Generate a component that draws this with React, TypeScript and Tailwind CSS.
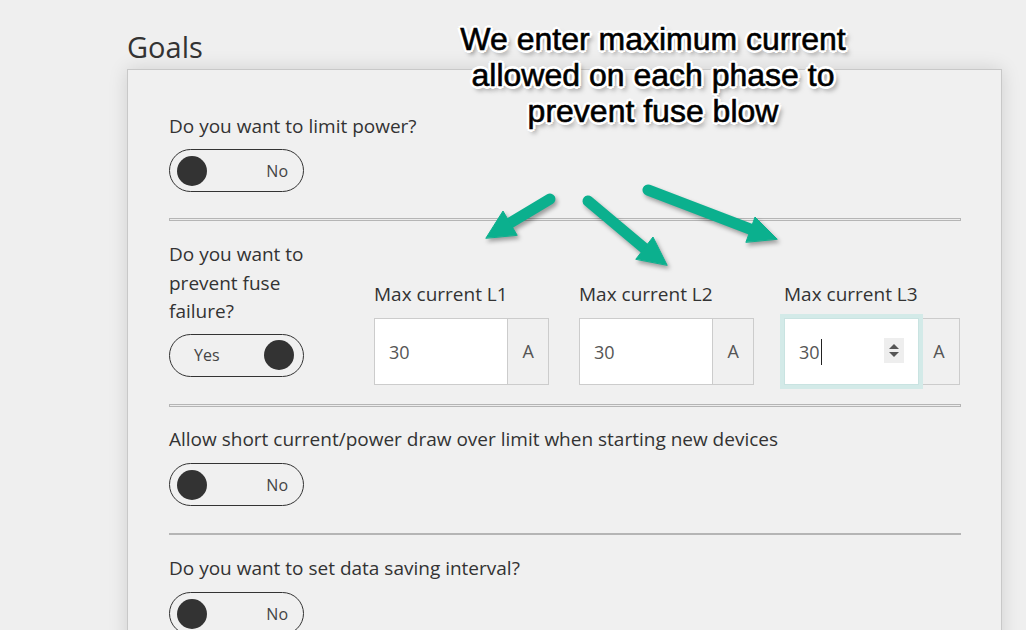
import React from "react";

function Toggle({ on }: { on: boolean }) {
  return (
    <div className="w-[135px] h-[43px] rounded-full border border-[#333] flex items-center px-[7px] box-border">
      {on ? (
        <div className="flex w-full items-center justify-between pl-[17px] pr-[2px]">
          <span className="text-[16px] text-[#444] leading-none">Yes</span>
          <span className="w-[30px] h-[30px] rounded-full bg-[#333] block" />
        </div>
      ) : (
        <div className="flex w-full items-center justify-between pr-[8px]">
          <span className="w-[30px] h-[30px] rounded-full bg-[#333] block" />
          <span className="text-[16px] text-[#444] leading-none">No</span>
        </div>
      )}
    </div>
  );
}

function Field({ label, focused }: { label: string; focused?: boolean }) {
  return (
    <div className="flex flex-col">
      <div className="text-[19px] leading-[28px] text-[#333]">{label}</div>
      <div className="mt-[10px] flex h-[67px]">
        <div
          className={
            focused
              ? "relative z-10 w-[135px] h-full bg-white border border-[#c9e3e1] shadow-[0_0_0_4px_#d3eae8] flex items-center pl-[14px]"
              : "w-[135px] h-full bg-white border border-[#cccccc] flex items-center pl-[14px]"
          }
        >
          <span className="text-[18px] text-[#555] leading-none">30</span>
          {focused && (
            <>
              <span className="ml-[1px] w-[1px] h-[26px] bg-[#222] block" />
              <span className="absolute right-[14px] top-[19px] w-[20px] h-[25px] bg-[#eeeeee] flex flex-col items-center justify-center gap-[3px]">
                <span className="block w-0 h-0 border-l-[5px] border-r-[5px] border-b-[5px] border-l-transparent border-r-transparent border-b-[#555]" />
                <span className="block w-0 h-0 border-l-[5px] border-r-[5px] border-t-[5px] border-l-transparent border-r-transparent border-t-[#555]" />
              </span>
            </>
          )}
        </div>
        <div className="w-[41px] h-full border border-l-0 border-[#cccccc] bg-[#f0f0f0] flex items-center justify-center text-[18px] text-[#555]">
          A
        </div>
      </div>
    </div>
  );
}

function Hr() {
  return <div className="h-[3px] border border-[#b5b5b5] bg-[#ececec]" />;
}

export default function App() {
  return (
    <div className="relative w-[1026px] h-[630px] overflow-hidden bg-[#efefef] font-['Open_Sans',sans-serif]">
      <div className="pl-[127px] pt-[29px]">
        <h1 className="text-[29px] leading-[36px] text-[#333] font-normal">Goals</h1>
        <div className="mt-[4px] w-[875px] h-[700px] border border-[#c8c8c8] bg-[#f0f0f0] shadow-[0_0_18px_rgba(0,0,0,0.13)] pl-[41px] pr-[40px] pt-[42px]">
          {/* Section 1 */}
          <div className="pb-[26px]">
            <div className="text-[19px] leading-[28px] text-[#333]">Do you want to limit power?</div>
            <div className="mt-[9px]">
              <Toggle on={false} />
            </div>
          </div>
          <Hr />
          {/* Section 2 */}
          <div className="pt-[19px] pb-[19px] flex">
            <div className="w-[205px] shrink-0">
              <div className="w-[150px] text-[19px] leading-[28.5px] text-[#333]">
                Do you want to prevent fuse failure?
              </div>
              <div className="mt-[8px]">
                <Toggle on={true} />
              </div>
            </div>
            <div className="mt-[40px] grid grid-cols-[175px_175px_176px] gap-[30px]">
              <Field label="Max current L1" />
              <Field label="Max current L2" />
              <Field label="Max current L3" focused />
            </div>
          </div>
          <Hr />
          {/* Section 3 */}
          <div className="pt-[18px] pb-[27px]">
            <div className="text-[19px] leading-[28px] text-[#333]">
              Allow short current/power draw over limit when starting new devices
            </div>
            <div className="mt-[10px]">
              <Toggle on={false} />
            </div>
          </div>
          <div className="h-[2px] bg-[#b5b5b5]" />
          {/* Section 4 */}
          <div className="pt-[19px]">
            <div className="text-[19px] leading-[28px] text-[#333]">Do you want to set data saving interval?</div>
            <div className="mt-[10px]">
              <Toggle on={false} />
            </div>
          </div>
        </div>
      </div>

      {/* Annotation */}
      <div className="absolute left-[653px] top-[21px] -translate-x-1/2 whitespace-nowrap text-center font-['Liberation_Sans',Arial,sans-serif] text-[32px] leading-[36px] text-black [-webkit-text-stroke:0.6px_#000] [text-shadow:-2px_-2px_0_#fff,2px_-2px_0_#fff,-2px_2px_0_#fff,2px_2px_0_#fff,0_-3px_0_#fff,0_3px_0_#fff,-3px_0_0_#fff,3px_0_0_#fff,3px_4px_5px_rgba(0,0,0,0.55)]">
        <div>We enter maximum current</div>
        <div>allowed on each phase to</div>
        <div>prevent fuse blow</div>
      </div>

      <svg
        className="absolute left-0 top-0 pointer-events-none drop-shadow-[2px_3px_2px_rgba(0,0,0,0.35)]"
        width="1026"
        height="630"
        viewBox="0 0 1026 630"
      >
        <g fill="#0bb08e" stroke="#0bb08e" strokeLinecap="round" strokeLinejoin="round">
          <line x1="550" y1="199" x2="510" y2="223" strokeWidth="11" />
          <polygon points="486,238 503,211 517,235" strokeWidth="1" />
          <line x1="588" y1="201" x2="644" y2="248" strokeWidth="11" />
          <polygon points="667,265 653,237 636,259" strokeWidth="1" />
          <line x1="648" y1="190" x2="750" y2="229" strokeWidth="11" />
          <polygon points="777,239 755,217 746,242" strokeWidth="1" />
        </g>
      </svg>
    </div>
  );
}
